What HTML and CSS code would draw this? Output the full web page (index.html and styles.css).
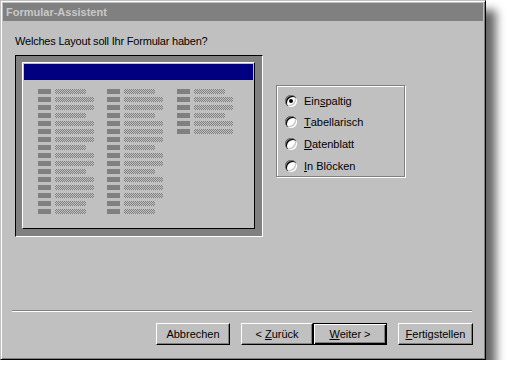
FILE: index.html
```html
<!DOCTYPE html>
<html lang="de">
<head>
  <meta charset="UTF-8">
  <title>Formular-Assistent</title>
  <link rel="stylesheet" href="styles.css">
</head>
<body>
  <div class="window">
    <div class="titlebar">Formular-Assistent</div>
    <div class="content">
      <p class="question">Welches Layout soll Ihr Formular haben?</p>

      <div class="layout">
        <div class="preview">
          <div class="sheet">
            <div class="sheet-head"></div>
            <div class="fields">
              <div class="col">
                <div class="fld"><span class="lbl"></span><span class="val"></span></div>
                <div class="fld"><span class="lbl"></span><span class="val long"></span></div>
                <div class="fld"><span class="lbl"></span><span class="val long"></span></div>
                <div class="fld"><span class="lbl"></span><span class="val"></span></div>
                <div class="fld"><span class="lbl"></span><span class="val long"></span></div>
                <div class="fld"><span class="lbl"></span><span class="val long"></span></div>
                <div class="fld"><span class="lbl"></span><span class="val long"></span></div>
                <div class="fld"><span class="lbl"></span><span class="val"></span></div>
                <div class="fld"><span class="lbl"></span><span class="val long"></span></div>
                <div class="fld"><span class="lbl"></span><span class="val long"></span></div>
                <div class="fld"><span class="lbl"></span><span class="val"></span></div>
                <div class="fld"><span class="lbl"></span><span class="val long"></span></div>
                <div class="fld"><span class="lbl"></span><span class="val long"></span></div>
                <div class="fld"><span class="lbl"></span><span class="val long"></span></div>
                <div class="fld"><span class="lbl"></span><span class="val"></span></div>
                <div class="fld"><span class="lbl"></span><span class="val"></span></div>
              </div>
              <div class="col">
                <div class="fld"><span class="lbl"></span><span class="val"></span></div>
                <div class="fld"><span class="lbl"></span><span class="val long"></span></div>
                <div class="fld"><span class="lbl"></span><span class="val long"></span></div>
                <div class="fld"><span class="lbl"></span><span class="val"></span></div>
                <div class="fld"><span class="lbl"></span><span class="val long"></span></div>
                <div class="fld"><span class="lbl"></span><span class="val long"></span></div>
                <div class="fld"><span class="lbl"></span><span class="val long"></span></div>
                <div class="fld"><span class="lbl"></span><span class="val"></span></div>
                <div class="fld"><span class="lbl"></span><span class="val long"></span></div>
                <div class="fld"><span class="lbl"></span><span class="val long"></span></div>
                <div class="fld"><span class="lbl"></span><span class="val"></span></div>
                <div class="fld"><span class="lbl"></span><span class="val long"></span></div>
                <div class="fld"><span class="lbl"></span><span class="val long"></span></div>
                <div class="fld"><span class="lbl"></span><span class="val long"></span></div>
                <div class="fld"><span class="lbl"></span><span class="val"></span></div>
                <div class="fld"><span class="lbl"></span><span class="val"></span></div>
              </div>
              <div class="col">
                <div class="fld"><span class="lbl"></span><span class="val"></span></div>
                <div class="fld"><span class="lbl"></span><span class="val long"></span></div>
                <div class="fld"><span class="lbl"></span><span class="val long"></span></div>
                <div class="fld"><span class="lbl"></span><span class="val"></span></div>
                <div class="fld"><span class="lbl"></span><span class="val long"></span></div>
                <div class="fld"><span class="lbl"></span><span class="val long"></span></div>
              </div>
            </div>
          </div>
        </div>

        <div class="options">
          <label class="opt"><span class="radio checked"></span>Ein<u>s</u>paltig</label>
          <label class="opt"><span class="radio"></span><u>T</u>abellarisch</label>
          <label class="opt"><span class="radio"></span><u>D</u>atenblatt</label>
          <label class="opt"><span class="radio"></span><u>I</u>n Blöcken</label>
        </div>
      </div>

      <div class="footer">
        <div class="separator"></div>
        <div class="buttons">
          <button class="btn btn-cancel">Abbrechen</button>
          <button class="btn btn-back">&lt; <u>Z</u>urück</button>
          <button class="btn btn-next"><u>W</u>eiter &gt;</button>
          <button class="btn btn-finish"><u>F</u>ertigstellen</button>
        </div>
      </div>
    </div>
  </div>
</body>
</html>
```

FILE: styles.css
```css
body { margin: 0; background: #fff; font-family: "Liberation Sans", Arial, sans-serif; font-size: 11px; color: #000; }

.window {
  width: 486px; height: 360px; box-sizing: border-box;
  padding: 2px; background: #c0c0c0;
  border: 1px solid; border-color: #c0c0c0 #000 #000 #c0c0c0;
  box-shadow: inset 1px 1px 0 #fff, inset -1px -1px 0 #808080, 10px 10px 9px rgba(0, 0, 0, 0.6);
  display: flex; flex-direction: column;
}

.titlebar { height: 18px; line-height: 18px; padding-left: 3px; background: #808080; color: #c8c8c8; font-weight: bold; }

.content { flex: 1; display: flex; flex-direction: column; }
.question { margin: 13px 0 0 12px; line-height: 14px; letter-spacing: -0.2px; }

.layout { display: flex; align-items: flex-start; margin: 7px 0 0 12px; }

/* the little form picture */
.preview {
  width: 248px; height: 182px; box-sizing: border-box;
  padding: 6px 7px 7px 6px; background: #808080;
  border: 1px solid; border-color: #000 #fff #fff #000;
}
.sheet {
  width: 233px; height: 167px; box-sizing: border-box; padding: 1px;
  background: #c0c0c0; border: 1px solid; border-color: #fff #000 #000 #fff;
}
.sheet-head { height: 16px; background: #000080; }
.fields { display: flex; margin-top: 9px; padding-left: 14px; }
.col { width: 69px; }
.col + .col { width: 70px; }
.fld { display: flex; height: 5px; margin-bottom: 3px; }
.lbl { width: 13px; background: #808080; }
.val { width: 31px; margin-left: 4px; background: repeating-conic-gradient(#808080 0 25%, #c0c0c0 0 50%) 0 0 / 2px 2px; }
.val.long { width: 39px; }

/* option group */
.options {
  width: 129px; height: 92px; box-sizing: border-box;
  margin: 30px 0 0 13px; padding: 4px 0 0 8px;
  border: 1px solid #808080;
  box-shadow: 1px 1px 0 #fff, inset 1px 1px 0 #fff;
}
.opt { display: flex; align-items: center; height: 22px; }
.opt:first-child { height: 21px; }
.radio {
  position: relative; width: 12px; height: 12px; margin-right: 7px; border-radius: 50%; background: #fff;
  box-shadow: inset 1px 1px 0 #808080, inset 2px 2px 0 #000, inset -1px -1px 0 #fff, inset -2px -2px 0 #c0c0c0;
}
.radio.checked::after {
  content: ""; position: absolute; left: 4px; top: 4px; width: 4px; height: 4px; border-radius: 50%; background: #000;
}

/* bottom bar */
.footer { margin-top: auto; padding-bottom: 12px; }
.separator { height: 0; margin: 0 11px 11px 9px; border-top: 1px solid #808080; border-bottom: 1px solid #fff; }
.buttons { display: flex; justify-content: flex-end; margin-right: 10px; }
.btn {
  height: 22px; padding: 0; font: inherit; color: #000; background: #c0c0c0;
  border: 1px solid; border-color: #fff #000 #000 #fff;
  box-shadow: inset -1px -1px 0 #808080;
}
.btn-cancel { width: 74px; margin-right: 11px; }
.btn-back { width: 72px; }
.btn-next { width: 74px; margin-right: 11px; border-color: #000; box-shadow: inset 1px 1px 0 #fff, inset -1px -1px 0 #000, inset -2px -2px 0 #808080; }
.btn-finish { width: 75px; }
```
